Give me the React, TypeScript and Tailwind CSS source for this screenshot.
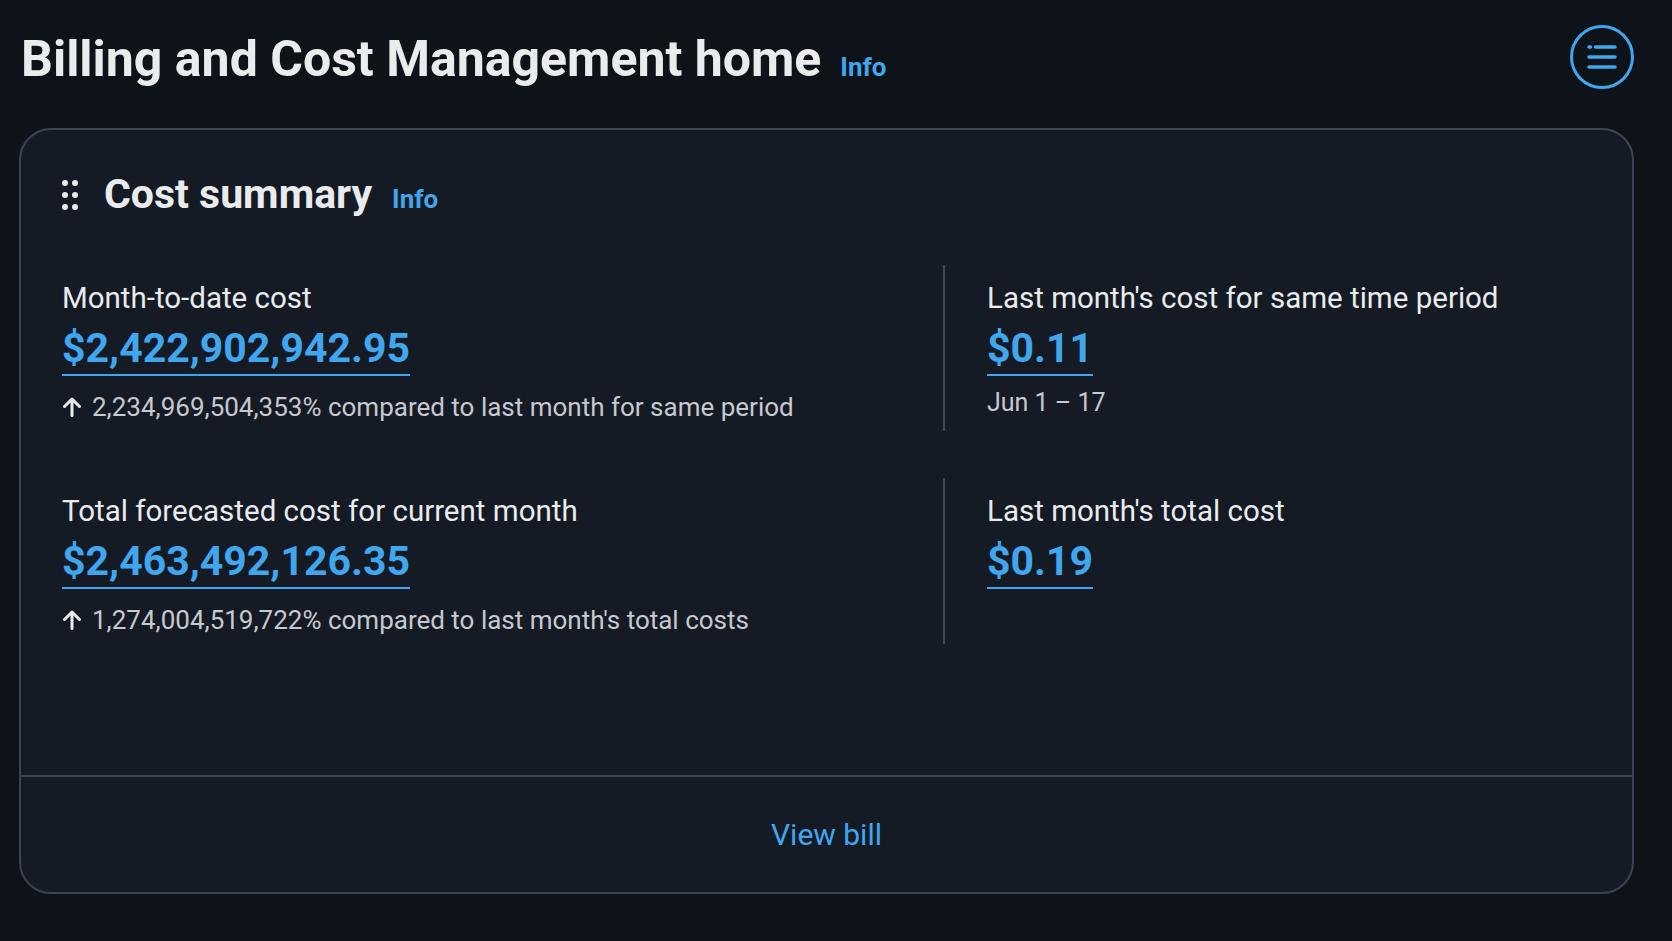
import type { ReactNode } from 'react';

const FONT = { fontFamily: 'Roboto, "Liberation Sans", sans-serif' };

/** Blue "Info" link shown beside headings. */
function InfoLink({ className = '' }: { className?: string }) {
  return (
    <a href="#" className={`text-[26px] font-bold text-[#40a6ee] ${className}`}>
      Info
    </a>
  );
}

/** Six-dot drag handle for board items. */
function DragHandle() {
  return (
    <svg width="16" height="30" viewBox="0 0 16 30" className="shrink-0" aria-hidden>
      {[3, 15, 27].map((cy) => (
        <g key={cy} fill="#e9ebed">
          <circle cx="3" cy={cy} r="3" />
          <circle cx="13" cy={cy} r="3" />
        </g>
      ))}
    </svg>
  );
}

function ArrowUp() {
  return (
    <svg width="20" height="20" viewBox="0 0 20 20" className="shrink-0" aria-hidden>
      <path
        d="M10 18.5V2M2.5 9.5L10 2l7.5 7.5"
        fill="none"
        stroke="#e9ebed"
        strokeWidth="3"
        strokeLinecap="round"
        strokeLinejoin="round"
      />
    </svg>
  );
}

function MenuButton() {
  return (
    <button
      type="button"
      className="flex h-16 w-16 items-center justify-center rounded-full border-[3px] border-[#40a6ee]"
      aria-label="Open navigation"
    >
      <svg width="30" height="24" viewBox="0 0 30 24" aria-hidden>
        <g stroke="#40a6ee" strokeWidth="3.5" strokeLinecap="round" fill="none">
          <path d="M2 2h1.5" />
          <path d="M8.5 2H28" />
          <path d="M2 12h26" />
          <path d="M2 22h26" />
        </g>
      </svg>
    </button>
  );
}

interface MetricProps {
  label: string;
  value: string;
  note?: ReactNode;
  divided?: boolean;
}

/** One cost figure: label, linked amount and optional comparison line. */
function Metric({ label, value, note, divided }: MetricProps) {
  return (
    <div className={divided ? 'border-l-2 border-[#3f4957] pl-[42px]' : ''}>
      <div className="pt-[13px] pb-[4px]">
        <div className="text-[29.5px] leading-[40px] text-[#e9ebed]">{label}</div>
        <div className="mt-[4px] leading-[52px]">
          <a
            href="#"
            className="inline-block border-b-2 border-[#40a6ee] text-[41px] font-bold leading-[52px] text-[#40a6ee]"
          >
            {value}
          </a>
        </div>
        {note}
      </div>
    </div>
  );
}

function Trend({ children }: { children: ReactNode }) {
  return (
    <div className="mt-[4px] flex h-[40px] items-center gap-[10px] text-[26px] text-[#c6c9ce]">
      <ArrowUp />
      <span>{children}</span>
    </div>
  );
}

export default function App() {
  return (
    <div className="min-h-screen bg-[#0e131a] pl-[19px] pr-[38px] pb-[50px]" style={FONT}>
      <header className="flex items-start justify-between pt-[25px] pl-[2px]">
        <div className="flex items-baseline gap-[19px]">
          <h1 className="text-[50px] font-bold leading-[68px] text-[#e9ebed]">
            Billing and Cost Management home
          </h1>
          <InfoLink />
        </div>
        <MenuButton />
      </header>

      <section className="mt-[35px] flex h-[766px] flex-col rounded-[32px] border-2 border-[#3b4452] bg-[#141b25]">
        <div className="flex items-center gap-[26px] px-[41px] pt-[40px]">
          <DragHandle />
          <div className="flex items-baseline gap-[20px]">
            <h2 className="text-[41px] font-bold leading-[48px] text-[#e9ebed]">Cost summary</h2>
            <InfoLink />
          </div>
        </div>

        <div className="mt-[46px] grid grid-cols-[881px_1fr] gap-y-[47px] px-[41px]">
          <Metric
            label="Month-to-date cost"
            value="$2,422,902,942.95"
            note={<Trend>2,234,969,504,353% compared to last month for same period</Trend>}
          />
          <Metric
            divided
            label="Last month's cost for same time period"
            value="$0.11"
            note={<div className="text-[25px] leading-[40px] text-[#c6c9ce]">Jun 1 – 17</div>}
          />
          <Metric
            label="Total forecasted cost for current month"
            value="$2,463,492,126.35"
            note={<Trend>1,274,004,519,722% compared to last month's total costs</Trend>}
          />
          <Metric divided label="Last month's total cost" value="$0.19" />
        </div>

        <div className="mt-auto flex h-[117px] items-center justify-center border-t-2 border-[#3b4452]">
          <a href="#" className="text-[30px] text-[#40a6ee]">
            View bill
          </a>
        </div>
      </section>
    </div>
  );
}
